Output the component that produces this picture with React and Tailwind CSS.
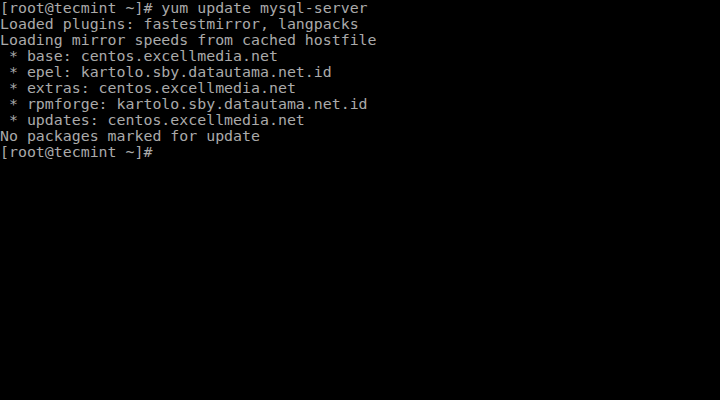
const lines = [
  "[root@tecmint ~]# yum update mysql-server",
  "Loaded plugins: fastestmirror, langpacks",
  "Loading mirror speeds from cached hostfile",
  " * base: centos.excellmedia.net",
  " * epel: kartolo.sby.datautama.net.id",
  " * extras: centos.excellmedia.net",
  " * rpmforge: kartolo.sby.datautama.net.id",
  " * updates: centos.excellmedia.net",
  "No packages marked for update",
  "[root@tecmint ~]#",
];

export default function App() {
  return (
    <div className="h-[400px] w-[720px] overflow-hidden bg-black">
      <pre className="whitespace-pre font-['DejaVu_Sans_Mono',monospace] text-[14.9px] leading-[16px] text-[#aaaaaa]">
        {lines.join("\n")}
      </pre>
    </div>
  );
}
